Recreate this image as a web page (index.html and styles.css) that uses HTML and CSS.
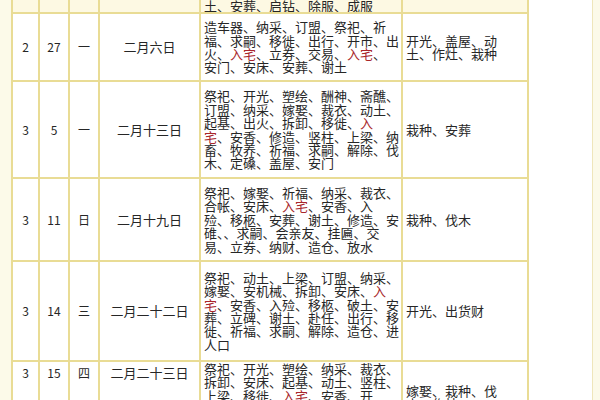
FILE: index.html
```html
<!DOCTYPE html>
<html lang="zh-CN">
<head>
<meta charset="utf-8">
<title>黄历</title>
<link rel="stylesheet" href="styles.css">
</head>
<body>
<div class="frame">
  <table class="almanac">
    <colgroup>
      <col class="c-m"><col class="c-d"><col class="c-w"><col class="c-l"><col class="c-y"><col class="c-j">
    </colgroup>
    <tr class="r0">
      <td></td><td></td><td></td><td></td>
      <td class="yi">土、安葬、启钻、除服、成服</td>
      <td class="ji"></td>
    </tr>
    <tr class="r1">
      <td>2</td><td>27</td><td>一</td><td class="lunar">二月六日</td>
      <td class="yi">造车器、纳采、订盟、祭祀、祈<br>福、求嗣、移徙、出行、开市、出<br>火、<span class="red">入宅</span>、立券、交易、<span class="red">入宅</span>、<br>安门、安床、安葬、谢土</td>
      <td class="ji">开光、盖屋、动<br>土、作灶、栽种</td>
    </tr>
    <tr class="r2">
      <td>3</td><td>5</td><td>一</td><td class="lunar">二月十三日</td>
      <td class="yi">祭祀、开光、塑绘、酬神、斋醮、<br>订盟、纳采、嫁娶、裁衣、动土、<br>起基、出火、拆卸、移徙、<span class="red">入</span><br><span class="red">宅</span>、安香、修造、竖柱、上梁、纳<br>畜、牧养、祈福、求嗣、解除、伐<br>木、定磉、盖屋、安门</td>
      <td class="ji">栽种、安葬</td>
    </tr>
    <tr class="r3">
      <td>3</td><td>11</td><td>日</td><td class="lunar">二月十九日</td>
      <td class="yi">祭祀、嫁娶、祈福、纳采、裁衣、<br>合帐、安床、<span class="red">入宅</span>、安香、入<br>殓、移柩、安葬、谢土、修造、安<br>碓、、求嗣、会亲友、挂匾、交<br>易、立券、纳财、造仓、放水</td>
      <td class="ji">栽种、伐木</td>
    </tr>
    <tr class="r4">
      <td>3</td><td>14</td><td>三</td><td class="lunar">二月二十二日</td>
      <td class="yi">祭祀、动土、上梁、订盟、纳采、<br>嫁娶、安机械、拆卸、安床、<span class="red">入</span><br><span class="red">宅</span>、安香、入殓、移柩、破土、安<br>葬、立碑、谢土、赴任、出行、移<br>徙、祈福、求嗣、解除、造仓、进<br>人口</td>
      <td class="ji">开光、出货财</td>
    </tr>
    <tr class="r5">
      <td>3</td><td>15</td><td>四</td><td class="lunar">二月二十三日</td>
      <td class="yi">祭祀、开光、塑绘、纳采、裁衣、<br>拆卸、安床、起基、动土、竖柱、<br>上梁、移徙、<span class="red">入宅</span>、安香、开<br>市、立券、纳财、求嗣、解除</td>
      <td class="ji">嫁娶、栽种、伐<br>木、作灶</td>
    </tr>
  </table>
</div>
</body>
</html>
```

FILE: styles.css
```css
html, body {
  margin: 0;
  padding: 0;
}
body {
  width: 600px;
  height: 400px;
  overflow: hidden;
  background: #fcfae9;
  font-family: "Noto Sans CJK SC", "Noto Sans", sans-serif;
  color: #262626;
}
.frame {
  margin-left: 11px;
  width: 581px;
  height: 400px;
  background: #ffffff;
  border-right: 1px solid #efe6bb;
  overflow: hidden;
}
.almanac {
  border-collapse: collapse;
  table-layout: fixed;
  width: 516px;
  margin-top: -22px;
}
.almanac td {
  border: 2px solid #e9dc95;
  text-align: center;
  vertical-align: middle;
  font-size: 12px;
  line-height: 13.4px;
  padding: 0;
  overflow: hidden;
}
.c-m { width: 27px; }
.c-d { width: 30px; }
.c-w { width: 30px; }
.c-l { width: 101px; }
.c-y { width: 202px; }
.c-j { width: 126px; }
.almanac td.lunar {
  font-size: 13px;
}
.almanac td.yi,
.almanac td.ji {
  text-align: left;
  font-size: 13px;
  padding: 0 2px 0 3px;
  white-space: nowrap;
}
.red {
  color: #a8262b;
}
.r0 td {
  height: 31px;
  background: #fdf9e3;
  vertical-align: bottom;
  padding-bottom: 1px;
}
.r1 td { height: 66px; }
.r2 td { height: 95px; }
.r3 td { height: 81px; }
.r4 td { height: 98px; }
.r5 td {
  height: 70px;
  vertical-align: top;
  padding-top: 4px;
}
.r5 td.ji {
  padding-top: 22px;
}
```
